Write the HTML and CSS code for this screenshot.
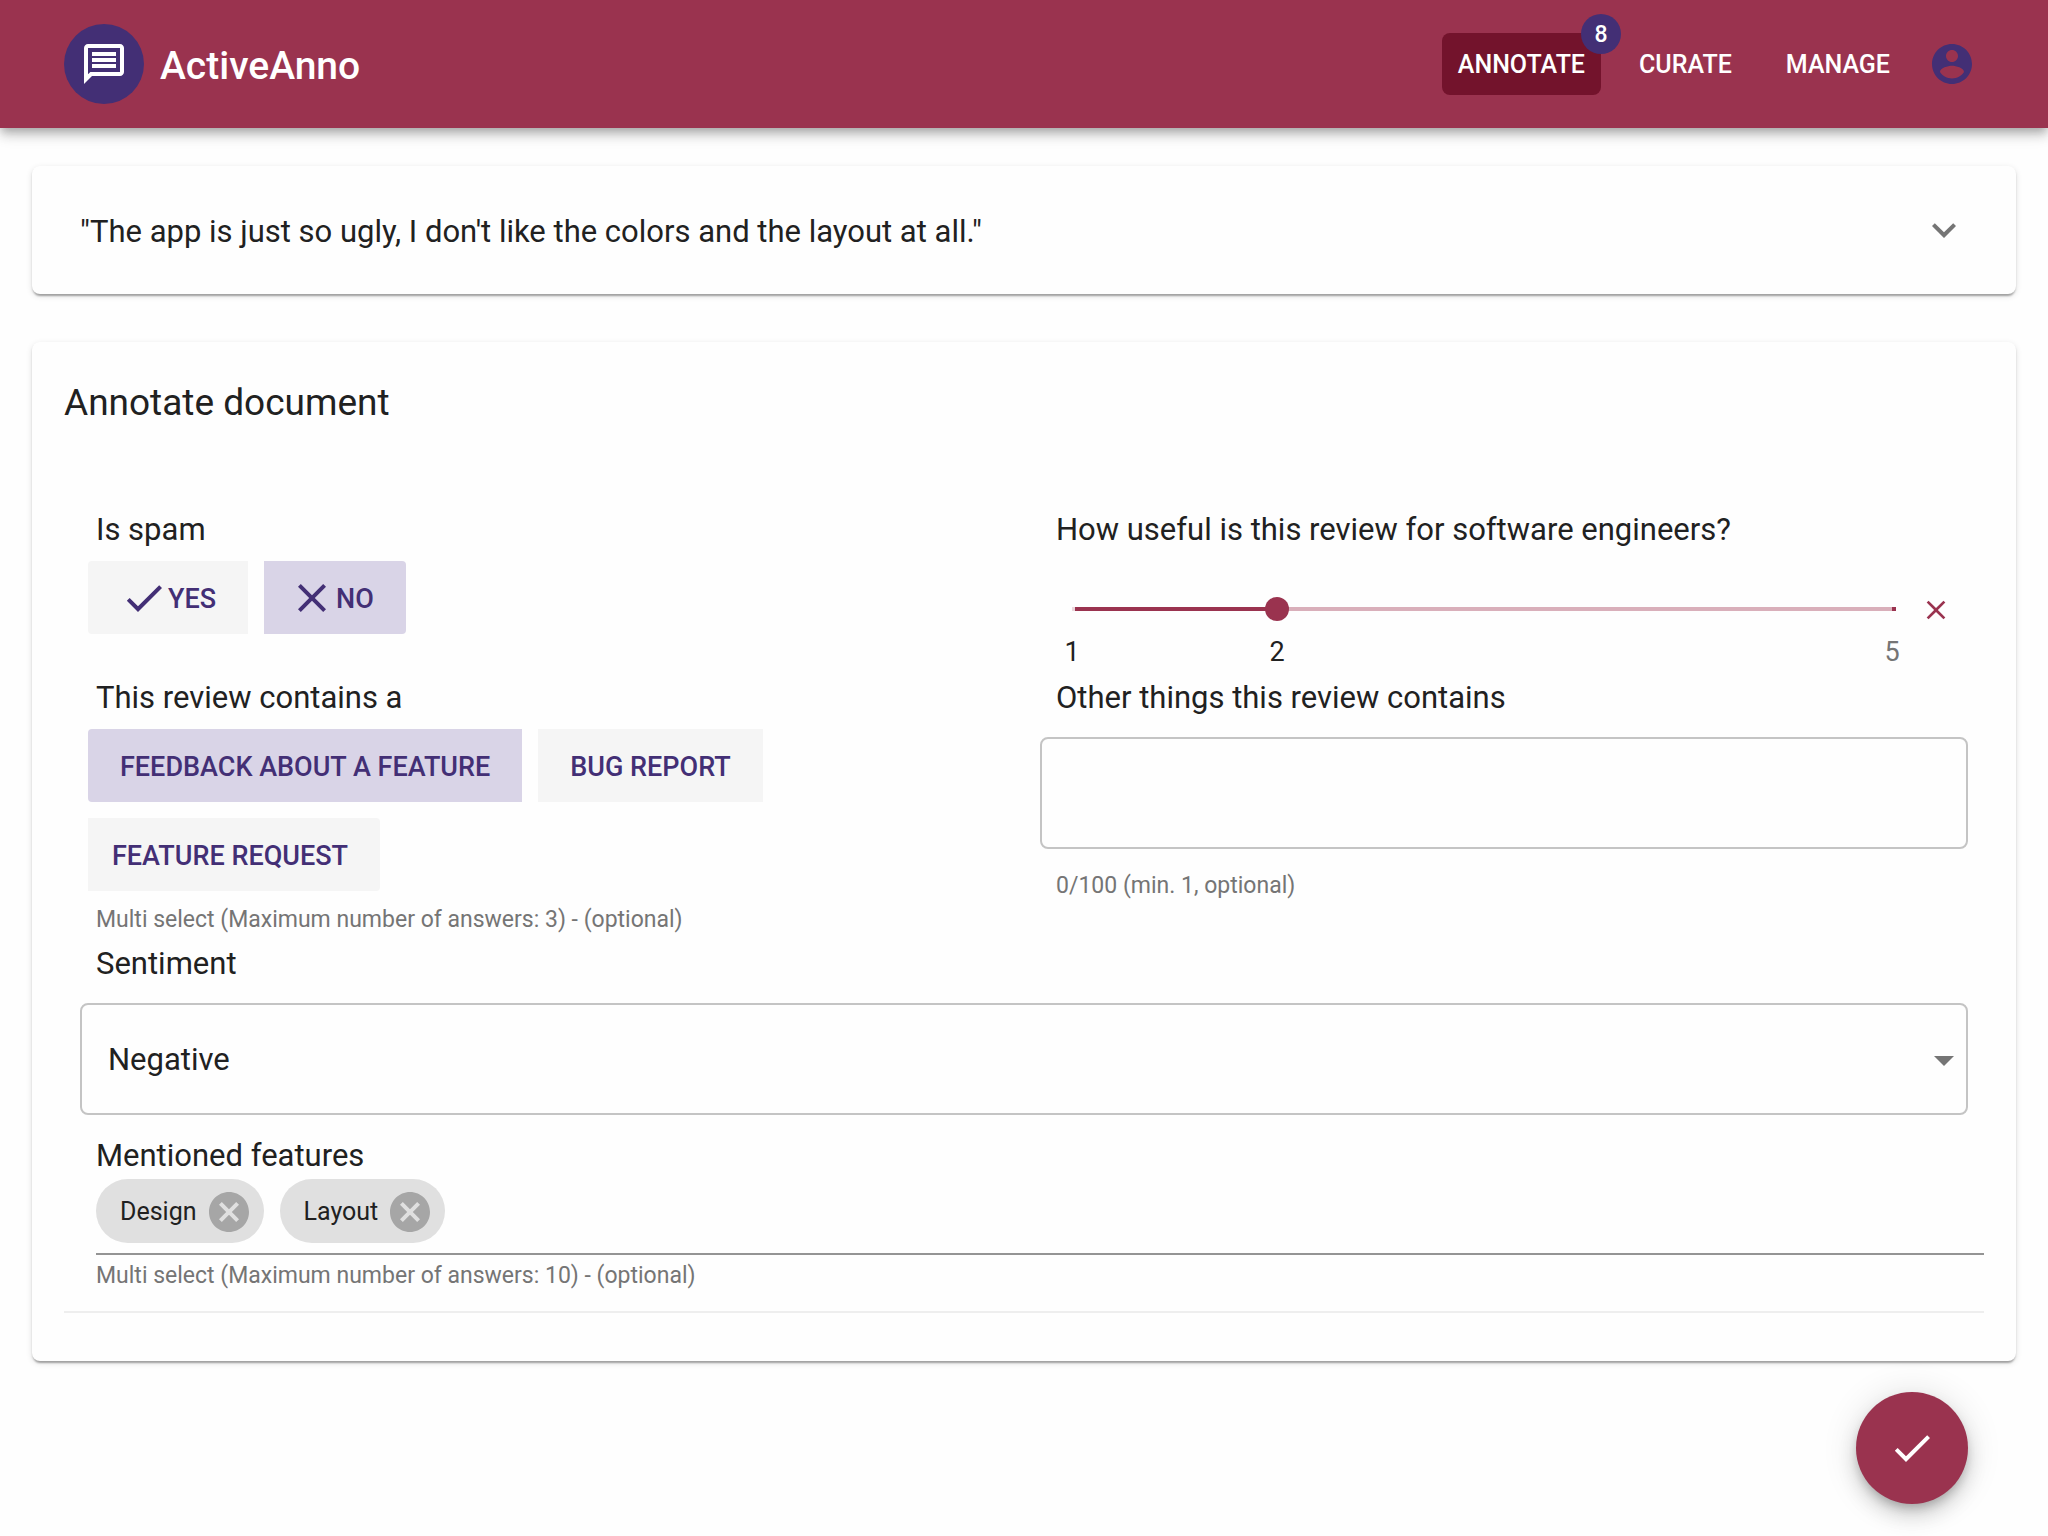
FILE: index.html
```html
<!DOCTYPE html>
<html lang="en">
<head>
<meta charset="utf-8">
<meta name="viewport" content="width=device-width, initial-scale=1">
<title>ActiveAnno</title>
<link rel="stylesheet" href="styles.css">
</head>
<body>
<header class="app-bar">
  <a class="brand" href="#home">
    <span class="brand-logo">
      <svg class="icon" viewBox="0 0 24 24" aria-hidden="true"><path d="M4 4h16v12H5.17L4 17.17V4m0-2c-1.1 0-1.99.9-1.99 2L2 22l4-4h14c1.1 0 2-.9 2-2V4c0-1.1-.9-2-2-2H4zm2 10h12v2H6v-2zm0-3h12v2H6V9zm0-3h12v2H6V6z"/></svg>
    </span>
    <span class="brand-name">ActiveAnno</span>
  </a>
  <nav class="nav">
    <a class="nav-link active" href="#annotate">ANNOTATE<span class="badge">8</span></a>
    <a class="nav-link" href="#curate">CURATE</a>
    <a class="nav-link" href="#manage">MANAGE</a>
    <button class="icon-button account" type="button" aria-label="Account">
      <svg class="icon" viewBox="0 0 24 24" aria-hidden="true"><path d="M12 2C6.48 2 2 6.48 2 12s4.48 10 10 10 10-4.48 10-10S17.52 2 12 2zm0 3c1.66 0 3 1.34 3 3s-1.34 3-3 3-3-1.34-3-3 1.34-3 3-3zm0 14.2c-2.5 0-4.71-1.28-6-3.22.03-1.99 4-3.08 6-3.08 1.99 0 5.97 1.09 6 3.08-1.29 1.94-3.5 3.22-6 3.22z"/></svg>
    </button>
  </nav>
</header>

<main class="content">
  <section class="card document">
    <p class="document-text">"The app is just so ugly, I don't like the colors and the layout at all."</p>
    <button class="icon-button expand" type="button" aria-label="Show details">
      <svg class="icon" viewBox="0 0 24 24" aria-hidden="true"><path d="M16.59 8.59L12 13.17 7.41 8.59 6 10l6 6 6-6z"/></svg>
    </button>
  </section>

  <form class="annotation">
    <section class="card annotation-card">
      <h1 class="card-title">Annotate document</h1>
      <div class="fields">
        <div class="field" role="group" aria-labelledby="spam-label">
          <div class="label" id="spam-label">Is spam</div>
          <div class="toggles">
            <button class="toggle first" type="button" aria-pressed="false">
              <svg class="icon" viewBox="0 0 24 24" aria-hidden="true"><path d="M9 16.17L4.83 12l-1.42 1.41L9 19 21 7l-1.41-1.41z"/></svg><span class="toggle-text">YES</span></button>
            <button class="toggle last" type="button" aria-pressed="true">
              <svg class="icon" viewBox="0 0 24 24" aria-hidden="true"><path d="M19 6.41L17.59 5 12 10.59 6.41 5 5 6.41 10.59 12 5 17.59 6.41 19 12 13.41 17.59 19 19 17.59 13.41 12z"/></svg><span class="toggle-text">NO</span></button>
          </div>
        </div>

        <div class="field">
          <label class="label" for="useful">How useful is this review for software engineers?</label>
          <div class="slider-row">
            <div class="slider">
              <input class="range" id="useful" type="range" min="1" max="5" value="2">
              <div class="marks">
                <span class="mark">1</span>
                <span class="mark current">2</span>
                <span class="mark end">5</span>
              </div>
            </div>
            <button class="icon-button clear" type="button" aria-label="Clear rating">
              <svg class="icon" viewBox="0 0 24 24" aria-hidden="true"><path d="M19 6.41L17.59 5 12 10.59 6.41 5 5 6.41 10.59 12 5 17.59 6.41 19 12 13.41 17.59 19 19 17.59 13.41 12z"/></svg>
            </button>
          </div>
        </div>

        <div class="field" role="group" aria-labelledby="contains-label">
          <div class="label" id="contains-label">This review contains a</div>
          <div class="toggles">
            <button class="toggle first" type="button" aria-pressed="true"><span class="toggle-text">FEEDBACK ABOUT A FEATURE</span></button>
            <button class="toggle" type="button" aria-pressed="false"><span class="toggle-text">BUG REPORT</span></button>
            <button class="toggle last" type="button" aria-pressed="false"><span class="toggle-text">FEATURE REQUEST</span></button>
          </div>
          <p class="hint toggles-hint">Multi select (Maximum number of answers: 3) - (optional)</p>
        </div>

        <div class="field">
          <label class="label" for="other">Other things this review contains</label>
          <input class="outlined" id="other" type="text" maxlength="100" aria-describedby="other-hint">
          <p class="hint text-hint" id="other-hint">0/100 (min. 1, optional)</p>
        </div>

        <div class="field wide">
          <label class="label" for="sentiment">Sentiment</label>
          <div class="select-wrap">
            <select class="outlined" id="sentiment">
              <option>Negative</option>
            </select>
            <svg class="icon select-arrow" viewBox="0 0 24 24" aria-hidden="true"><path d="M7 10l5 5 5-5z"/></svg>
          </div>
        </div>

        <div class="field wide features">
          <label class="label" for="features">Mentioned features</label>
          <div class="chip-input">
            <span class="chip">Design<button class="chip-delete" type="button" aria-label="Remove Design"><svg class="icon" viewBox="0 0 24 24" aria-hidden="true"><path d="M12 2C6.47 2 2 6.47 2 12s4.47 10 10 10 10-4.47 10-10S17.53 2 12 2zm5 13.59L15.59 17 12 13.41 8.41 17 7 15.59 10.59 12 7 8.41 8.41 7 12 10.59 15.59 7 17 8.41 13.41 12 17 15.59z"/></svg></button></span>
            <span class="chip">Layout<button class="chip-delete" type="button" aria-label="Remove Layout"><svg class="icon" viewBox="0 0 24 24" aria-hidden="true"><path d="M12 2C6.47 2 2 6.47 2 12s4.47 10 10 10 10-4.47 10-10S17.53 2 12 2zm5 13.59L15.59 17 12 13.41 8.41 17 7 15.59 10.59 12 7 8.41 8.41 7 12 10.59 15.59 7 17 8.41 13.41 12 17 15.59z"/></svg></button></span>
            <input class="chip-entry" id="features" type="text" aria-describedby="features-hint">
          </div>
          <p class="hint features-hint" id="features-hint">Multi select (Maximum number of answers: 10) - (optional)</p>
        </div>
      </div>
      <hr class="divider">
    </section>
    <button class="fab" type="submit" aria-label="Finish annotation">
      <svg class="icon" viewBox="0 0 24 24" aria-hidden="true"><path d="M9 16.17L4.83 12l-1.42 1.41L9 19 21 7l-1.41-1.41z"/></svg>
    </button>
  </form>
</main>
</body>
</html>
```
FILE: styles.css
```css
:root {
  --primary: #9a334f;
  --primary-dark: #73132c;
  --secondary: #432f75;
  --surface: #fefefe;
  --text: #212121;
  --text-muted: #757575;
}

* {
  box-sizing: border-box;
}

body {
  margin: 0;
  background: var(--surface);
  color: var(--text);
  font-family: Roboto, "Liberation Sans", sans-serif;
  font-size: 31px;
}

button,
input,
select {
  font: inherit;
  color: inherit;
}

button {
  border: 0;
  padding: 0;
  cursor: pointer;
}

p,
h1 {
  margin: 0;
  font-weight: 400;
}

.icon {
  display: block;
  flex: none;
  width: 48px;
  height: 48px;
  fill: currentColor;
}

.icon-button {
  background: none;
}

/* App bar */
.app-bar {
  position: relative;
  display: flex;
  align-items: center;
  justify-content: space-between;
  height: 128px;
  padding: 0 64px;
  background: var(--primary);
  color: #fff;
  box-shadow: 0 4px 8px -2px rgba(0, 0, 0, .2), 0 8px 10px rgba(0, 0, 0, .14), 0 2px 20px rgba(0, 0, 0, .12);
}

.brand {
  display: flex;
  align-items: center;
  gap: 16px;
  color: inherit;
  text-decoration: none;
}

.brand-logo {
  display: flex;
  align-items: center;
  justify-content: center;
  width: 80px;
  height: 80px;
  border-radius: 50%;
  background: var(--secondary);
}

.brand-name {
  padding-top: 3px;
  font-size: 39px;
  font-weight: 500;
}

.nav {
  display: flex;
  align-items: center;
  gap: 22px;
}

.nav-link {
  position: relative;
  padding: 15px 16px 13px;
  border-radius: 8px;
  color: inherit;
  font-size: 25px;
  line-height: 34px;
  font-weight: 500;
  text-decoration: none;
}

.nav-link.active {
  background: var(--primary-dark);
}

.badge {
  position: absolute;
  top: -19px;
  right: -20px;
  width: 40px;
  height: 40px;
  border-radius: 50%;
  background: var(--secondary);
  font-size: 23px;
  line-height: 42px;
  text-align: center;
}

.account {
  margin-right: 8px;
  color: var(--secondary);
}

/* Cards */
.content {
  padding: 38px 32px 32px;
}

.card {
  border-radius: 8px;
  background: var(--surface);
  box-shadow: 0 4px 2px -2px rgba(0, 0, 0, .2), 0 2px 2px rgba(0, 0, 0, .14), 0 2px 6px rgba(0, 0, 0, .12);
}

.document {
  display: flex;
  align-items: center;
  justify-content: space-between;
  min-height: 128px;
  padding: 0 48px;
}

.document-text {
  padding-top: 2px;
}

.expand {
  color: var(--text-muted);
}

.annotation {
  display: flex;
  flex-direction: column;
  margin-top: 48px;
}

.annotation-card {
  padding: 32px 32px 48px;
}

.card-title {
  font-size: 37px;
  line-height: 58px;
}

/* Fields */
.fields {
  display: grid;
  grid-template-columns: 1fr 1fr;
  margin-top: 77px;
}

.field {
  padding: 0 16px 6px;
}

.wide {
  grid-column: 1 / -1;
}

.label {
  display: block;
  padding-left: 16px;
  line-height: 42px;
}

.hint {
  padding-left: 16px;
  color: var(--text-muted);
  font-size: 23px;
  line-height: 34px;
}

.toggles {
  display: flex;
  flex-wrap: wrap;
  gap: 16px;
  margin-top: 10px;
  padding: 0 200px 0 8px;
}

.toggle {
  display: flex;
  align-items: center;
  height: 73px;
  padding: 0 32px;
  background: #f5f5f5;
  color: var(--secondary);
  font-size: 27px;
  font-weight: 500;
}

.toggle[aria-pressed="true"] {
  background: #d9d4e7;
}

.toggle.first {
  border-radius: 4px 0 0 4px;
}

.toggle.last {
  padding-left: 24px;
  border-radius: 0 4px 4px 0;
}

.toggle-text {
  padding-top: 2px;
}

.toggles-hint {
  margin-top: 12px;
}

/* Slider */
.slider-row {
  display: flex;
  align-items: flex-start;
  gap: 16px;
  margin-top: 34px;
  padding: 0 16px 0 20px;
}

.slider {
  flex: 1;
}

.range {
  appearance: none;
  display: block;
  width: 100%;
  height: 48px;
  margin: 0;
  background:
    linear-gradient(#ebd6dc, #ebd6dc) 12px 50% / 3px 4px no-repeat,
    linear-gradient(var(--primary), var(--primary)) calc(100% - 8px) 50% / 4px 4px no-repeat,
    linear-gradient(90deg, var(--primary) 25%, #d9afba 25%) 50% 50% / calc(100% - 24px) 4px no-repeat;
}

.range::-webkit-slider-thumb {
  appearance: none;
  width: 24px;
  height: 24px;
  border-radius: 50%;
  background: var(--primary);
}

.marks {
  display: grid;
  grid-template-columns: 0 1fr 0 3fr 0;
  justify-items: center;
  padding: 0 12px;
  font-size: 27px;
  line-height: 38px;
}

.mark.current {
  grid-column: 3;
}

.mark.end {
  grid-column: 5;
  color: var(--text-muted);
}

.clear {
  display: flex;
  align-items: center;
  height: 50px;
  color: var(--primary);
}

.clear .icon {
  width: 32px;
  height: 32px;
}

/* Outlined inputs */
.outlined {
  appearance: none;
  display: block;
  width: 100%;
  height: 112px;
  margin-top: 18px;
  padding: 0 26px;
  border: 2px solid #c4c4c4;
  border-radius: 8px;
  background: var(--surface);
}

.text-hint {
  margin-top: 20px;
}

.select-wrap {
  position: relative;
  padding-bottom: 14px;
}

.select-arrow {
  position: absolute;
  top: 33px;
  right: 0;
  color: var(--text-muted);
  pointer-events: none;
}

/* Chips */
.features {
  padding-right: 0;
}

.chip-input {
  display: flex;
  gap: 16px;
  margin: 2px 0 0 16px;
  padding-bottom: 10px;
  border-bottom: 2px solid #949494;
}

.chip {
  display: flex;
  align-items: center;
  gap: 8px;
  height: 64px;
  padding: 1px 11px 0 24px;
  border-radius: 32px;
  background: #e0e0e0;
  font-size: 25px;
}

.chip-delete {
  background: none;
  color: #a6a6a6;
}

.chip-entry {
  flex: 1;
  min-width: 0;
  border: 0;
  background: none;
  outline: 0;
}

.features-hint {
  margin-top: 4px;
}

.divider {
  height: 2px;
  margin: 12px 0 0;
  border: 0;
  background: #eee;
}

.fab {
  display: flex;
  align-items: center;
  justify-content: center;
  align-self: flex-end;
  width: 112px;
  height: 112px;
  margin: 31px 48px 0 0;
  border-radius: 50%;
  background: var(--primary);
  color: #fff;
  box-shadow: 0 6px 10px -2px rgba(0, 0, 0, .2), 0 12px 20px rgba(0, 0, 0, .14), 0 2px 36px rgba(0, 0, 0, .12);
}
```
